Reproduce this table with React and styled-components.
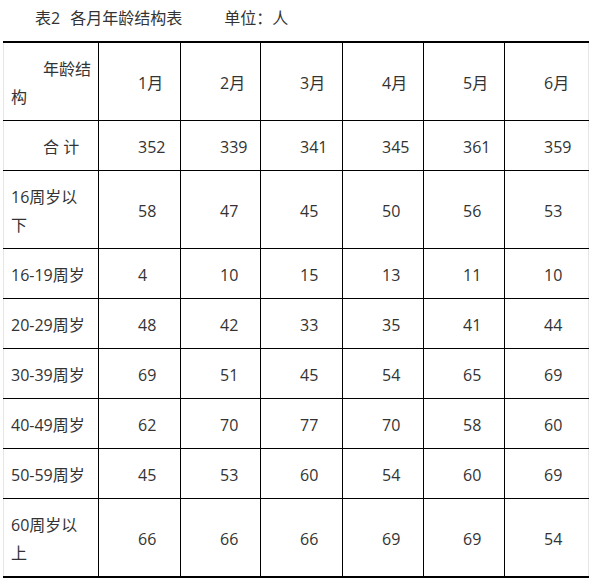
import React from "react";
import styled, { createGlobalStyle } from "styled-components";

const GlobalStyle = createGlobalStyle`
  body {
    margin: 0;
    background: #fff;
    font-family: "Open Sans", "Noto Sans CJK SC", sans-serif;
    color: #333;
  }
`;

const Page = styled.div`
  padding: 4px 0 0 3px;
  width: 585px;
`;

const Caption = styled.p`
  margin: 0 0 9px;
  font-size: 16px;
  line-height: 28px;
  text-indent: 32px;
  white-space: nowrap;
`;

const Gap = styled.span`
  display: inline-block;
  width: ${(p) => p.$w}px;
`;

const Table = styled.table`
  width: 585px;
  table-layout: fixed;
  border-collapse: collapse;
  border-top: 2px solid #000;
  border-bottom: 2px solid #000;
  border-left: 1px solid #e6e6e6;
  border-right: 1px solid #e6e6e6;
  font-size: 16px;
  line-height: 28px;
`;

const Cell = styled.td`
  border-top: 1px solid #000;
  border-bottom: 1px solid #000;
  border-left: 1px solid #000;
  padding: 12px 6px 9px 39px;
  vertical-align: middle;
  text-align: left;
  word-break: break-all;

  &:first-child {
    border-left: 1px solid #e6e6e6;
    padding-left: 7px;
    text-indent: ${(p) => (p.$indent ? "32px" : "0")};
  }
`;

const widths = [95, 82, 80, 82, 81, 81, 84];

const months = ["1月", "2月", "3月", "4月", "5月", "6月"];

const rows = [
  { label: "合 计", indent: true, values: [352, 339, 341, 345, 361, 359] },
  { label: "16周岁以下", values: [58, 47, 45, 50, 56, 53] },
  { label: "16-19周岁", values: [4, 10, 15, 13, 11, 10] },
  { label: "20-29周岁", values: [48, 42, 33, 35, 41, 44] },
  { label: "30-39周岁", values: [69, 51, 45, 54, 65, 69] },
  { label: "40-49周岁", values: [62, 70, 77, 70, 58, 60] },
  { label: "50-59周岁", values: [45, 53, 60, 54, 60, 69] },
  { label: "60周岁以上", values: [66, 66, 66, 69, 69, 54] },
];

export default function App() {
  return (
    <Page>
      <GlobalStyle />
      <Caption>
        表2<Gap $w={10} />各月年龄结构表<Gap $w={42} />单位：人
      </Caption>
      <Table>
        <colgroup>
          {widths.map((w, i) => (
            <col key={i} style={{ width: w }} />
          ))}
        </colgroup>
        <tbody>
          <tr>
            <Cell $indent>年龄结构</Cell>
            {months.map((m) => (
              <Cell key={m}>{m}</Cell>
            ))}
          </tr>
          {rows.map((r) => (
            <tr key={r.label}>
              <Cell $indent={r.indent}>{r.label}</Cell>
              {r.values.map((v, i) => (
                <Cell key={i}>{v}</Cell>
              ))}
            </tr>
          ))}
        </tbody>
      </Table>
    </Page>
  );
}
